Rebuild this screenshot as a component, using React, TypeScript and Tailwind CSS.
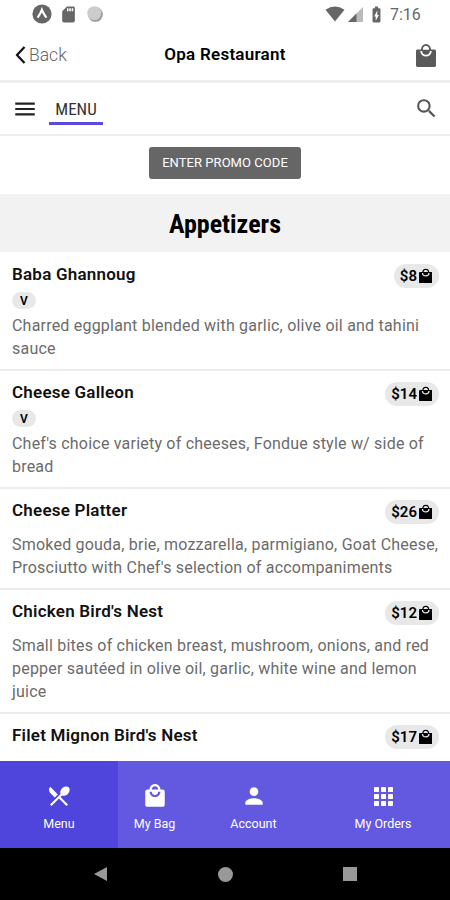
import React from "react";
import {
  MdBatteryChargingFull,
  MdLocalMall,
  MdMenu,
  MdPerson,
  MdRestaurantMenu,
  MdSdCard,
  MdSearch,
} from "react-icons/md";

interface MenuItem {
  name: string;
  price: number;
  veg?: boolean;
  lines: string[];
}

const items: MenuItem[] = [
  {
    name: "Baba Ghannoug",
    price: 8,
    veg: true,
    lines: ["Charred eggplant blended with garlic, olive oil and tahini", "sauce"],
  },
  {
    name: "Cheese Galleon",
    price: 14,
    veg: true,
    lines: ["Chef's choice variety of cheeses, Fondue style w/ side of", "bread"],
  },
  {
    name: "Cheese Platter",
    price: 26,
    lines: [
      "Smoked gouda, brie, mozzarella, parmigiano, Goat Cheese,",
      "Prosciutto with Chef's selection of accompaniments",
    ],
  },
  {
    name: "Chicken Bird's Nest",
    price: 12,
    lines: [
      "Small bites of chicken breast, mushroom, onions, and red",
      "pepper sautéed in olive oil, garlic, white wine and lemon",
      "juice",
    ],
  },
  { name: "Filet Mignon Bird's Nest", price: 17, lines: [] },
];

interface BagIconProps {
  width: number;
  height: number;
  cup: string;
  className?: string;
}

const BagIcon: React.FC<BagIconProps> = ({ width, height, cup, className }) => (
  <svg className={className} width={width} height={height} viewBox="0 0 20 24" preserveAspectRatio="none">
    <rect x="0" y="6.5" width="20" height="17.5" rx="1.4" fill="currentColor" />
    <path d="M5.8 7.5 A4.2 5.5 0 0 1 14.2 7.5" fill="none" stroke="currentColor" strokeWidth="2" />
    <path d="M7 6.5 A3 3 0 0 1 13 6.5 Z" fill={cup} />
    <path d="M5.2 8 A4.8 4.6 0 0 0 14.8 8" fill="none" stroke={cup} strokeWidth="1.9" />
  </svg>
);

const GridIcon: React.FC = () => (
  <svg width="19" height="19" viewBox="0 0 19 19" fill="currentColor">
    {[0, 7, 14].map((y) =>
      [0, 7, 14].map((x) => <rect key={`${x}-${y}`} x={x} y={y} width="5" height="5" rx="0.4" />)
    )}
  </svg>
);

const StatusBar: React.FC = () => (
  <div className="flex h-7 shrink-0 items-center pr-[30px] pl-8 text-[#666]">
    <svg width="20" height="20" viewBox="0 0 20 20">
      <circle cx="10" cy="10" r="9.6" fill="#666" />
      <path d="M5.6 13.6 Q8.4 9.5 9.9 5.8 Q11.4 9.5 14.4 13.6" fill="none" stroke="#fff" strokeWidth="2.2" />
    </svg>
    <MdSdCard className="ml-[7px]" size={19} />
    <svg className="ml-[9px]" width="16" height="16" viewBox="0 0 16 16">
      <circle cx="8.4" cy="8.4" r="7.4" fill="#999" />
      <circle cx="7.3" cy="7.3" r="7" fill="#ccc" />
    </svg>
    <svg className="ml-auto" width="20" height="16" viewBox="0 0 20 16">
      <path d="M0.5 3.7 Q10 -2.9 19.5 3.7 L10 15.5 Z" fill="#666" />
    </svg>
    <svg className="ml-[3px]" width="15" height="15" viewBox="0 0 15 15">
      <path d="M0 15 L15 0 V15 Z" fill="#bbb" />
      <path d="M0 15 L8.5 6.5 V15 Z" fill="#666" />
    </svg>
    <MdBatteryChargingFull className="ml-[4px]" size={19} />
    <span className="ml-[4px] w-[30px] pt-px text-[16px] whitespace-nowrap">7:16</span>
  </div>
);

const MenuRow: React.FC<{ item: MenuItem }> = ({ item }) => (
  <div className="shrink-0 border-b-2 border-[#ededed] px-3 pt-[9px] pb-[9px]">
    <div className="flex h-6 items-start justify-between">
      <h3 className="text-[17px] leading-6 font-semibold tracking-[0.22px] text-[#111]">{item.name}</h3>
      <div className="mt-[2px] -mr-[1px] flex h-[24px] items-center rounded-full bg-[#e8e8e8] pr-[7px] pl-[6px] text-[15px] font-semibold text-black">
        ${item.price}
        <BagIcon className="-mt-px ml-[1.5px]" width={13.5} height={15} cup="#e8e8e8" />
      </div>
    </div>
    {item.veg ? (
      <div className="mt-[6px] mb-[5px] flex h-[17px] w-6 items-center justify-center rounded-full bg-[#e8e8e8] text-xs font-semibold text-black">
        V
      </div>
    ) : (
      <div className="h-[11px]" />
    )}
    {item.lines.map((line) => (
      <p key={line} className="text-[16px] leading-[23px] tracking-[0.21px] whitespace-nowrap text-[#6b6b6b]">
        {line}
      </p>
    ))}
  </div>
);

const App: React.FC = () => {
  return (
    <div className="flex h-[900px] w-[450px] flex-col overflow-hidden bg-white font-[Roboto,sans-serif]">
      <StatusBar />
      <header className="grid h-[55px] shrink-0 grid-cols-3 items-center border-b-3 border-[#eee] px-3 pt-[2px] text-[17px]">
        <div className="flex items-center text-[#666]">
          <svg className="ml-[3px]" width="11" height="18" viewBox="0 0 11 18">
            <path d="M9.5 1 L2 9 L9.5 17" fill="none" stroke="#111" strokeWidth="2.2" />
          </svg>
          <span className="ml-[3px] text-[17.5px] font-light">Back</span>
        </div>
        <h1 className="text-center font-semibold tracking-[0.25px] whitespace-nowrap text-black">Opa Restaurant</h1>
        <BagIcon className="mr-[2px] justify-self-end text-[#5a5a5a]" width={20} height={24} cup="#fff" />
      </header>

      <div className="flex h-[53px] shrink-0 items-center border-b-2 border-[#eee] pr-[11px] pl-3">
        <MdMenu className="text-[#222]" size={26} />
        <div className="ml-[11px] flex h-8 w-[54px] items-center justify-center border-b-3 border-[#5b4bdc] pt-[5px] font-['Roboto_Condensed',Roboto,sans-serif] text-[17px] text-[#333]">
          MENU
        </div>
        <MdSearch className="ml-auto text-[#555]" size={25} />
      </div>

      <div className="flex h-[58px] shrink-0 items-center justify-center">
        <button className="mb-1 h-8 w-[152px] rounded-[3px] bg-[#666] text-[13px] tracking-[0.05px] whitespace-nowrap text-white">
          ENTER PROMO CODE
        </button>
      </div>

      <h2 className="flex h-[58px] shrink-0 items-center justify-center bg-[#f2f2f2] pt-[2px] font-['Roboto_Condensed',Roboto,sans-serif] text-[26px] font-bold text-black">
        Appetizers
      </h2>

      <main className="flex min-h-0 flex-1 flex-col overflow-hidden pt-px">
        {items.map((item) => (
          <MenuRow key={item.name} item={item} />
        ))}
      </main>

      <nav className="flex h-[87px] shrink-0 bg-[#6259e0] text-[12.5px] text-white">
        <div className="flex w-[118px] flex-col items-center bg-[#4f44dc] pt-[22px]">
          <MdRestaurantMenu size={26} />
          <span className="mt-[6px]">Menu</span>
        </div>
        <div className="flex w-[73px] flex-col items-center pt-[22px]">
          <MdLocalMall size={26} />
          <span className="mt-[6px]">My Bag</span>
        </div>
        <div className="flex w-[125px] flex-col items-center pt-[22px]">
          <MdPerson size={26} />
          <span className="mt-[6px]">Account</span>
        </div>
        <div className="flex flex-1 flex-col items-center pt-[26px]">
          <GridIcon />
          <span className="mt-[9px]">My Orders</span>
        </div>
      </nav>

      <footer className="flex h-[52px] shrink-0 items-center justify-between bg-black pr-[93px] pl-[93px]">
        <svg width="15" height="16" viewBox="0 0 15 16">
          <path d="M14 1 V15 L1 8 Z" fill="#999" />
        </svg>
        <div className="h-[15px] w-[15px] rounded-full bg-[#999]" />
        <div className="h-[14px] w-[14px] bg-[#999]" />
      </footer>
    </div>
  );
};

export default App;
